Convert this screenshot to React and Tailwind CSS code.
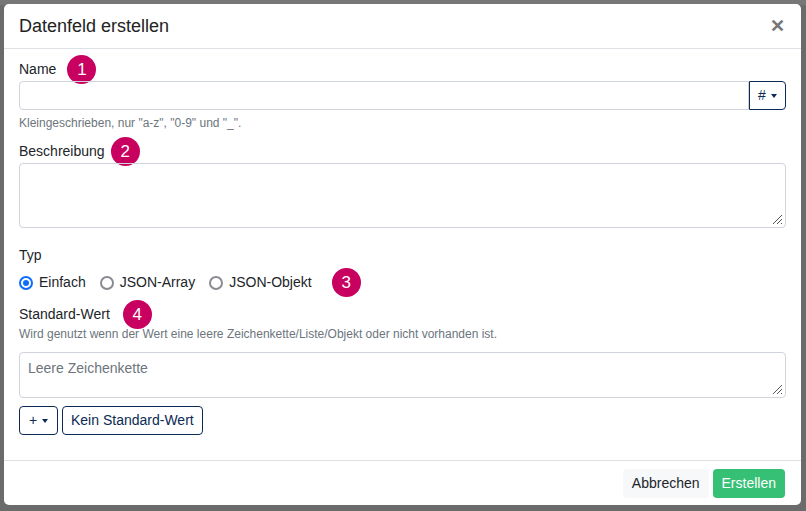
const Badge = ({ n }) => (
  <span className="inline-flex w-[29px] h-[29px] rounded-full bg-[#c8005f] text-white text-[17px] items-center justify-center">{n}</span>
);

const Radio = ({ checked, label }) => (
  <label className="flex items-center gap-[6px]">
    {checked ? (
      <span className="w-[14px] h-[14px] rounded-full border-[2px] border-[#0d6efd] flex items-center justify-center">
        <span className="w-[6px] h-[6px] rounded-full bg-[#0d6efd]"></span>
      </span>
    ) : (
      <span className="w-[14px] h-[14px] rounded-full border-[2px] border-[#8a8a92]"></span>
    )}
    <span>{label}</span>
  </label>
);

const Grip = () => (
  <svg className="absolute right-[2px] bottom-[2px]" width="12" height="12" viewBox="0 0 12 12">
    <path d="M11 2 L2 11 M11 6 L6 11 M11 10 L10 11" stroke="#555" strokeWidth="1" />
  </svg>
);

const Caret = () => <span className="inline-block ml-[5px] border-x-[3px] border-x-transparent border-t-[4px] border-t-[#0b2a55] align-middle"></span>;

export default function App() {
  return (
    <div className="w-[806px] h-[511px] bg-[#6b6b6b] relative overflow-hidden text-[14px] text-[#212529]" style={{ fontFamily: '"Liberation Sans", Arial, sans-serif' }}>
      <div className="absolute left-0 top-0 h-[5px] w-full bg-[#777]"></div>
      <div className="absolute left-[4px] top-[4px] w-[797px] h-[501px] bg-white rounded-[5px] flex flex-col">
        <div className="h-[45px] flex items-center justify-between pl-[15px] pr-[16px] border-b border-[#dee2e6]">
          <h1 className="text-[18px] text-[#222]">Datenfeld erstellen</h1>
          <span className="text-[#777] text-[18px] font-bold">✕</span>
        </div>
        <div className="flex-1 px-[15px] pt-[6px]">
          <div className="flex items-center gap-[11px]">
            <span>Name</span><Badge n="1" />
          </div>
          <div className="flex mt-[-3px] h-[29px]">
            <div className="flex-1 border border-[#ced4da] rounded-l-[4px]"></div>
            <div className="w-[37px] border border-[#0b2a55] rounded-r-[4px] flex items-center justify-center text-[#0b2a55]">#<Caret /></div>
          </div>
          <p className="text-[12px] text-[#6c757d] mt-[4px]">Kleingeschrieben, nur "a-z", "0-9" und "_".</p>
          <div className="flex items-center gap-[6px] mt-[5px]">
            <span>Beschreibung</span><Badge n="2" />
          </div>
          <div className="relative h-[65px] mt-[-3px] border border-[#ced4da] rounded-[4px]"><Grip /></div>
          <div className="mt-[17px]">Typ</div>
          <div className="flex items-center gap-[14px] mt-[2px]">
            <Radio checked label="Einfach" />
            <Radio label="JSON-Array" />
            <Radio label="JSON-Objekt" />
            <span className="ml-[6px]"><Badge n="3" /></span>
          </div>
          <div className="flex items-center gap-[13px] mt-[3px]">
            <span>Standard-Wert</span><Badge n="4" />
          </div>
          <p className="text-[12px] text-[#6c757d] mt-[-4px]">Wird genutzt wenn der Wert eine leere Zeichenkette/Liste/Objekt oder nicht vorhanden ist.</p>
          <div className="relative h-[46px] mt-[9px] border border-[#ced4da] rounded-[4px] px-[8px] pt-[5px] text-[#6c757d]">Leere Zeichenkette<Grip /></div>
          <div className="flex gap-[4px] mt-[8px]">
            <div className="w-[39px] h-[29px] border border-[#0b2a55] rounded-[4px] flex items-center justify-center text-[#0b2a55]">+<Caret /></div>
            <div className="h-[29px] px-[8px] border border-[#0b2a55] rounded-[4px] flex items-center text-[#0b2a55]">Kein Standard-Wert</div>
          </div>
        </div>
        <div className="h-[45px] border-t border-[#dee2e6] flex items-center justify-end gap-[4px] pr-[16px]">
          <div className="h-[29px] px-[9px] bg-[#f6f8fa] rounded-[4px] flex items-center">Abbrechen</div>
          <div className="h-[29px] px-[9px] bg-[#35c075] text-white rounded-[4px] flex items-center">Erstellen</div>
        </div>
      </div>
    </div>
  );
}
